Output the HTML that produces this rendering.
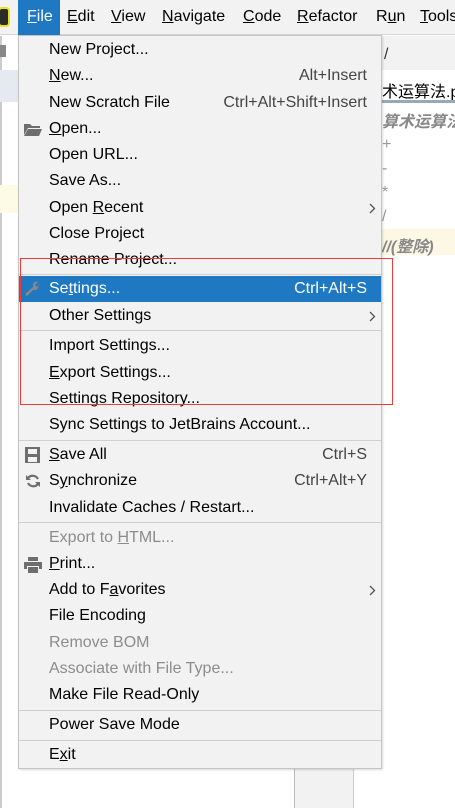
<!DOCTYPE html>
<html><head><meta charset="utf-8"><style>
*{margin:0;padding:0;box-sizing:border-box}
body{width:455px;height:808px;overflow:hidden;background:#fff;font-family:"Liberation Sans","Noto Sans CJK SC",sans-serif;font-size:16px;color:#000;position:relative}
.abs{position:absolute}
.mb{left:0;top:0;width:455px;height:35px;background:#f2f2f2;border-bottom:1px solid #d6d6d6}
.mb span{position:absolute;top:8px;font-size:16px}
.menu{left:18px;top:35px;width:364px;height:734px;background:#f2f2f2;border:1px solid #c4c4c4;box-shadow:1px 1px 2px rgba(0,0,0,.15)}
.it{position:absolute;left:0;width:362px;height:26px;line-height:26px;padding-left:30px;white-space:nowrap}
.it .k{position:absolute;right:14px;top:0;color:#444}
.it.dis{color:#8c8c8c}
.it.sel{background:#1e78c2;color:#fff}
.it.sel .k{color:#fff}
.sep{position:absolute;left:0;width:362px;height:1px;background:#d0d0d0}
.arr{position:absolute;right:5px;top:8px}
u{text-decoration:underline}
</style></head><body>
<div class="abs mb">
<div class="abs" style="left:0;top:9px;width:8px;height:16px;background:#2b2b2b;border-radius:2px;box-shadow:0 0 0 2px #e8e020"></div>
<div class="abs" style="left:18px;top:0;width:42px;height:35px;background:#1e78c2"></div>
<span style="left:27px;color:#fff"><u>F</u>ile</span>
<span style="left:67px"><u>E</u>dit</span>
<span style="left:111px"><u>V</u>iew</span>
<span style="left:162px"><u>N</u>avigate</span>
<span style="left:243px"><u>C</u>ode</span>
<span style="left:297px"><u>R</u>efactor</span>
<span style="left:376px">R<u>u</u>n</span>
<span style="left:420px"><u>T</u>ools</span>
</div>
<div class="abs" style="left:0;top:36px;width:18px;height:772px;background:#fff;border-left:2px solid #ccc"></div>
<div class="abs" style="left:0;top:45px;width:6px;height:12px;background:#888"></div>
<div class="abs" style="left:0;top:70px;width:18px;height:32px;background:#e5e9f0"></div>
<div class="abs" style="left:0;top:185px;width:18px;height:28px;background:#fdfbe6"></div>
<div class="abs" style="left:382px;top:36px;width:73px;height:34px;background:#f2f2f2"></div>
<div class="abs" style="left:384px;top:46px;color:#333">/</div>
<div class="abs" style="left:382px;top:78px;font-size:16px;white-space:nowrap">术运算法.py</div>
<div class="abs" style="left:382px;top:100px;width:73px;height:3px;background:#9aa7b6"></div>
<div class="abs" style="left:382px;top:108px;color:#888;font-style:italic;font-weight:bold;white-space:nowrap">算术运算法</div>
<div class="abs" style="left:382px;top:136px;color:#999">+</div>
<div class="abs" style="left:382px;top:160px;color:#999">-</div>
<div class="abs" style="left:382px;top:184px;color:#999">*</div>
<div class="abs" style="left:382px;top:208px;color:#999">/</div>
<div class="abs" style="left:382px;top:229px;width:73px;height:26px;background:#fdf8e4"></div>
<div class="abs" style="left:382px;top:233px;color:#888;font-style:italic;font-weight:bold;white-space:nowrap">//(整除)</div>
<div class="abs" style="left:294px;top:768px;width:60px;height:40px;background:#f2f2f2;border-left:1px solid #bbb;border-right:1px solid #ccc"></div>

<div class="abs menu">
<div class="it" style="top:1px">New Project...</div>
<div class="it" style="top:27px"><u>N</u>ew...<span class="k">Alt+Insert</span></div>
<div class="it" style="top:54px">New Scratch File<span class="k">Ctrl+Alt+Shift+Insert</span></div>
<div class="it" style="top:80px"><svg class="abs" style="left:5px;top:7px" width="18" height="13"><path d="M0 1h6l2 2h8v2H4L0 12z M4 6h14l-3 7H0z" fill="#6e6e6e"/></svg><u>O</u>pen...</div>
<div class="it" style="top:106px">Open URL...</div>
<div class="it" style="top:132px">Save As...</div>
<div class="it" style="top:159px">Open <u>R</u>ecent<svg class="arr" width="7" height="11"><path d="M1 1l4.5 4.5L1 10" stroke="#555" stroke-width="1.3" fill="none"/></svg></div>
<div class="it" style="top:185px">Close Project</div>
<div class="it" style="top:211px">Rename Project...</div>
<div class="sep" style="top:238px"></div>
<div class="it sel" style="top:240px"><svg class="abs" style="left:6px;top:5px" width="16" height="16"><path d="M15 3l-3 3-2-2 3-3c-2-1-5 0-5 3 0 1 0 1 0 2L1 12c-1 1 0 3 1 3l6-6c1 0 1 0 2 0 3 0 4-3 3-5z" fill="#888"/></svg>Se<u>t</u>tings...<span class="k">Ctrl+Alt+S</span></div>
<div class="it" style="top:267px">Other Settings<svg class="arr" width="7" height="11"><path d="M1 1l4.5 4.5L1 10" stroke="#555" stroke-width="1.3" fill="none"/></svg></div>
<div class="sep" style="top:294px"></div>
<div class="it" style="top:297px">Import Settings...</div>
<div class="it" style="top:324px"><u>E</u>xport Settings...</div>
<div class="it" style="top:350px">Settings Repository...</div>
<div class="it" style="top:376px">Sync Settings to JetBrains Account...</div>
<div class="sep" style="top:404px"></div>
<div class="it" style="top:406px"><svg class="abs" style="left:6px;top:5px" width="15" height="16"><path d="M0 0h15v16H0z M3 2v5h9V2z M3 10v5h9v-5z" fill="#6e6e6e" fill-rule="evenodd"/></svg><u>S</u>ave All<span class="k">Ctrl+S</span></div>
<div class="it" style="top:432px"><svg class="abs" style="left:6px;top:5px" width="16" height="16"><path d="M13 6A6 6 0 0 0 3 5M3 10a6 6 0 0 0 10 1" stroke="#6e6e6e" stroke-width="2.2" fill="none"/><path d="M1 2v5h5zM15 14V9h-5z" fill="#6e6e6e"/></svg>S<u>y</u>nchronize<span class="k">Ctrl+Alt+Y</span></div>
<div class="it" style="top:459px">Invalidate Caches / Restart...</div>
<div class="sep" style="top:486px"></div>
<div class="it dis" style="top:489px">Export to <u>H</u>TML...</div>
<div class="it" style="top:515px"><svg class="abs" style="left:5px;top:6px" width="18" height="16"><path d="M4 0h10v4H4z M0 5h18v7h-3v-3H3v3H0z M4 10h10v6H4z" fill="#6e6e6e"/></svg><u>P</u>rint...</div>
<div class="it" style="top:541px">Add to F<u>a</u>vorites<svg class="arr" width="7" height="11"><path d="M1 1l4.5 4.5L1 10" stroke="#555" stroke-width="1.3" fill="none"/></svg></div>
<div class="it" style="top:567px">File Encoding</div>
<div class="it dis" style="top:594px">Remove BOM</div>
<div class="it dis" style="top:620px">Associate with File Type...</div>
<div class="it" style="top:646px">Make File Read-Only</div>
<div class="sep" style="top:674px"></div>
<div class="it" style="top:676px">Power Save Mode</div>
<div class="sep" style="top:704px"></div>
<div class="it" style="top:706px">E<u>x</u>it</div>
</div>
<div class="abs" style="left:20px;top:258px;width:373px;height:147px;border:1px solid #f03a3a"></div>
</body></html>
